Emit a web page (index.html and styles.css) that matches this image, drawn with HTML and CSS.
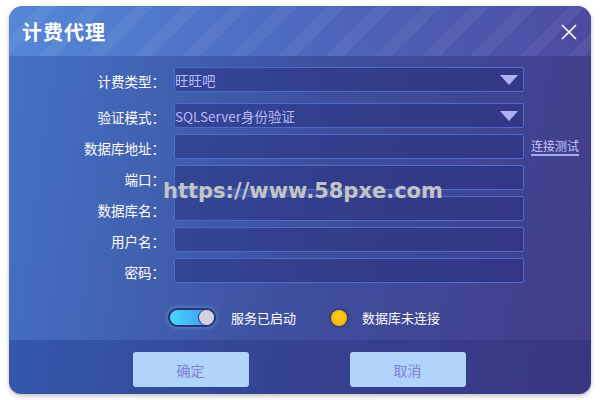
FILE: index.html
```html
<!DOCTYPE html>
<html>
<head>
    <title>计费代理</title>
    <meta charset="UTF-8">
    <link rel="stylesheet" href="styles.css">
</head>
<body>

    <div class="dialog">
        <div class="header">
            <h1>计费代理</h1>
            <span class="close">
                <svg width="16" height="16" viewBox="0 0 16 16"><path d="M1 1 L15 15 M15 1 L1 15" stroke="#ffffff" stroke-width="1.6" fill="none"/></svg>
            </span>
        </div>

        <div class="content">
            <div class="form">
                <label>计费类型：</label>
                <div class="field select"><span>旺旺吧</span><i class="arrow"></i></div>
                <span></span>

                <label class="second">验证模式：</label>
                <div class="field select second"><span>SQLServer身份验证</span><i class="arrow"></i></div>
                <span class="second"></span>

                <label>数据库地址：</label>
                <div class="field"></div>
                <a class="test" href="#">连接测试</a>

                <label>端口：</label>
                <div class="field"></div>
                <span></span>

                <label>数据库名：</label>
                <div class="field"></div>
                <span></span>

                <label>用户名：</label>
                <div class="field"></div>
                <span></span>

                <label>密码：</label>
                <div class="field"></div>
                <span></span>
            </div>

            <div class="status">
                <div class="item">
                    <span class="toggle"><i></i></span>
                    <span>服务已启动</span>
                </div>
                <div class="item">
                    <span class="dot"></span>
                    <span>数据库未连接</span>
                </div>
            </div>

            <div class="watermark">https://www.58pxe.com</div>
        </div>

        <div class="footer">
            <button>确定</button>
            <button>取消</button>
        </div>
    </div>

</body>
</html>
```

FILE: styles.css
```css
body {
    margin: 0;
    padding: 6px 9px;
    background: #ffffff;
    font-family: "Noto Sans CJK SC", "Liberation Sans", sans-serif;
}
.dialog {
    width: 582px;
    height: 388px;
    border-radius: 14px 14px 12px 12px;
    overflow: hidden;
    display: flex;
    flex-direction: column;
    background: linear-gradient(100deg, #3f6ec2 0%, #3d4f9f 50%, #433d89 100%);
    box-shadow: 0px 2px 5px rgba(0,0,0,0.25);
    position: relative;
}
.header {
    height: 50px;
    display: flex;
    align-items: center;
    justify-content: space-between;
    padding: 0 14px 0 13px;
    background:
        repeating-linear-gradient(135deg, rgba(255,255,255,0) 0px, rgba(255,255,255,0) 22px, rgba(255,255,255,0.05) 22px, rgba(255,255,255,0.05) 34px),
        linear-gradient(100deg, #5587d6 0%, #4d6cc0 45%, #4c4aa0 100%);
}
.header h1 {
    margin: 0;
    color: #ffffff;
    font-family: "Liberation Serif", "Noto Sans CJK SC", serif;
    font-size: 20px;
    font-weight: bold;
    letter-spacing: 1px;
}
.close {
    display: flex;
    margin-top: 2px;
}
.content {
    flex: 1;
    position: relative;
    background: linear-gradient(90deg, rgba(255,255,255,0.03), rgba(255,255,255,0) 60%);
}
.form {
    display: grid;
    grid-template-columns: 156px 350px 60px;
    column-gap: 9px;
    row-gap: 6px;
    padding-top: 11px;
    align-items: center;
}
.form .second {
    margin-top: 5px;
}
.form label {
    color: #ffffff;
    font-size: 13.5px;
    text-align: right;
    padding-top: 2px;
}
.field {
    height: 23px;
    border: 1px solid #4a6ccb;
    border-radius: 2px;
    background: rgba(36,42,120,0.45);
    display: flex;
    align-items: center;
    justify-content: space-between;
    padding: 0 5px 0 0;
    color: #b9b9ff;
    font-size: 13.5px;
}
.arrow {
    width: 0;
    height: 0;
    border-left: 9px solid transparent;
    border-right: 9px solid transparent;
    border-top: 10px solid #b0b0f4;
}
.test {
    color: #c4c4ff;
    font-size: 12px;
    text-decoration: none;
    border-bottom: 2px solid #a8a8f8;
    justify-self: start;
    margin-left: -2px;
    line-height: 16px;
}
.status {
    display: flex;
    padding: 25px 0 0 159px;
    gap: 35px;
}
.status .item {
    display: flex;
    align-items: center;
    gap: 15px;
    color: #ffffff;
    font-size: 13px;
}
.toggle {
    width: 44px;
    height: 15px;
    border: 2px solid #2d3272;
    border-radius: 10px;
    background: linear-gradient(90deg, #48d8ff, #3a90f2);
    box-shadow: 0 0 5px rgba(120,200,255,0.6);
    display: flex;
    justify-content: flex-end;
}
.toggle i {
    width: 15px;
    height: 15px;
    border-radius: 50%;
    background: #d2d2e4;
    box-shadow: -1px 0 0 #2d3272;
}
.dot {
    width: 16px;
    height: 16px;
    border-radius: 50%;
    background: radial-gradient(circle at 50% 40%, #ffd21a, #f0a800);
    box-shadow: 0 0 2px 1px rgba(30,30,90,0.6);
}
.watermark {
    position: absolute;
    left: 154px;
    top: 123px;
    color: #c4c4c4;
    font-family: "DejaVu Sans", sans-serif;
    font-weight: bold;
    font-size: 21px;
}
.footer {
    height: 54px;
    display: flex;
    justify-content: center;
    gap: 101px;
    padding-top: 12px;
    padding-right: 2px;
    box-sizing: border-box;
    background: linear-gradient(100deg, rgba(20,40,120,0.25), rgba(30,30,100,0.25));
}
button {
    width: 116px;
    height: 35px;
    border: none;
    border-radius: 3px;
    background-color: #b0d4fc;
    color: #8080d8;
    font-family: "Noto Sans CJK SC", sans-serif;
    font-size: 14px;
    cursor: pointer;
}
```
